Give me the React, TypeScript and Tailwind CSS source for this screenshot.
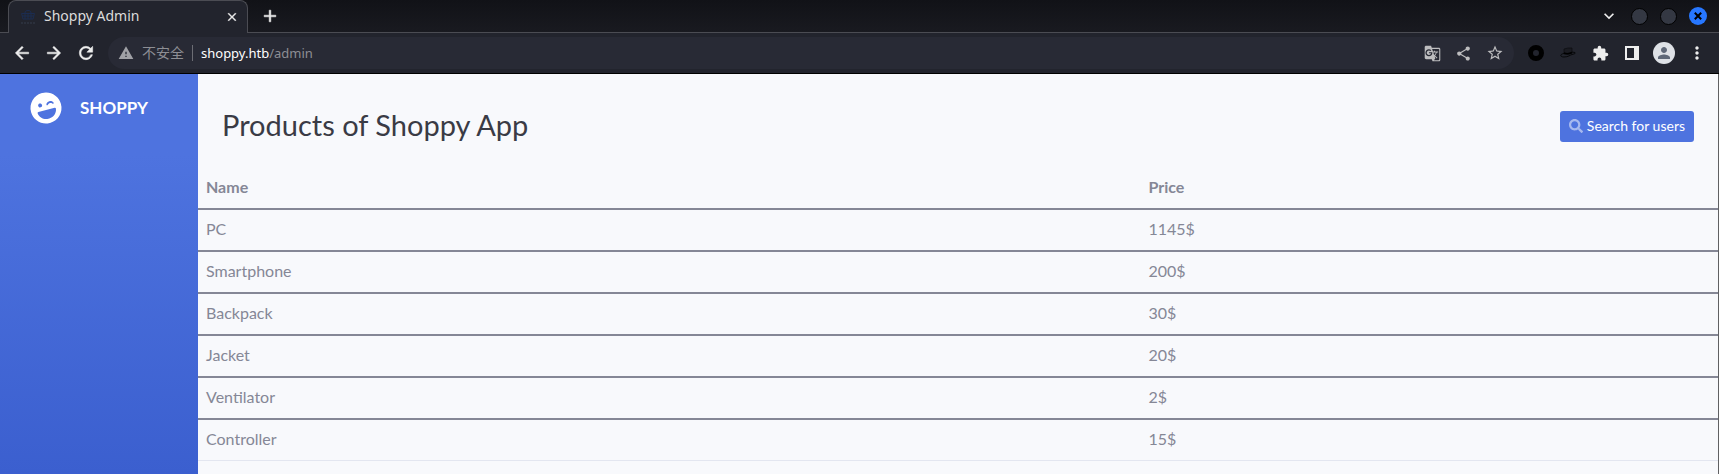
import {
  MdArrowBack, MdArrowForward, MdRefresh, MdWarning, MdGTranslate, MdShare, MdStarBorder,
  MdExtension, MdMoreVert, MdClose, MdAdd, MdPerson, MdExpandMore,
} from "react-icons/md";
import { FaLaughWink, FaSearch } from "react-icons/fa";

const products = [
  { name: "PC", price: "1145$" },
  { name: "Smartphone", price: "200$" },
  { name: "Backpack", price: "30$" },
  { name: "Jacket", price: "20$" },
  { name: "Ventilator", price: "2$" },
  { name: "Controller", price: "15$" },
];

const boldIcon = "[&>path:last-child]:stroke-current [&>path:last-child]:[stroke-width:0.6]";

function Favicon() {
  return (
    <svg viewBox="0 0 16 16" className="size-4" fill="none" stroke="#1b2c50" aria-hidden="true">
      <path d="M5 4c0-3.500 6-3.500 6 0M1.500 4.500h13l-1.500 5.500h-10zM5 5v5M8 5v5M11 5v5M2 7h12" />
      <path d="M1 14h14" stroke="#2b303c" strokeWidth="2" strokeDasharray="2 1" />
    </svg>
  );
}

function TabStrip() {
  return (
    <div className="flex h-8 items-center bg-linear-to-b from-[#111217] to-[#191a20]">
      <div className="relative z-10 ml-2 -mb-px flex h-[33px] w-60 items-center rounded-t-lg border border-b-0 border-[#4b4c53] bg-[#22242d] pl-[11px] pr-2">
        <Favicon />
        <span className="ml-2 flex-1 pb-0.5 text-sm text-[#dcdcdc]">Shoppy Admin</span>
        <button aria-label="Close tab" className="text-[#eeeeee]"><MdClose size={14} className={boldIcon} /></button>
      </div>
      <button aria-label="New tab" className="ml-3 text-[#eeeeee]"><MdAdd size={20} className={boldIcon} /></button>
      <div className="ml-auto flex items-center pr-3">
        <button aria-label="Search tabs" className="mr-3 text-[#eeeeee]"><MdExpandMore size={20} /></button>
        <button aria-label="Minimize" className="mr-3 size-[17px] rounded-full border border-black bg-[#343843]" />
        <button aria-label="Maximize" className="mr-3 size-[17px] rounded-full border border-black bg-[#343843]" />
        <button aria-label="Close window" className="flex size-[18px] items-center justify-center rounded-full bg-[#2777ff] text-black">
          <svg viewBox="0 0 10 10" className="size-2" stroke="currentColor" strokeWidth="2.5"><path d="M1 1l8 8M9 1l-8 8" /></svg>
        </button>
      </div>
    </div>
  );
}

function Toolbar() {
  return (
    <div className="flex h-[42px] items-center border-t border-b border-t-[#4b4c53] border-b-black bg-[#22242d] pl-3 pr-3 text-[#eeeeee]">
      <button aria-label="Back"><MdArrowBack size={20} className={boldIcon} /></button>
      <button aria-label="Forward" className="ml-3"><MdArrowForward size={20} className={boldIcon} /></button>
      <button aria-label="Reload" className="ml-3"><MdRefresh size={20} className={boldIcon} /></button>
      <div className="ml-3 flex h-8 flex-1 items-center rounded-full bg-[#282a35] pl-2.5 pr-2.5 text-sm">
        <MdWarning size={16} className="text-[#a0a1a6]" />
        <span className="ml-2 text-[#8d8e94]">不安全</span>
        <span className="mx-2 h-4 w-px bg-[#6c6d74]" />
        <span className="flex-1 text-[13px] text-[#8d8e94]"><span className="text-white">shoppy.htb</span>/admin</span>
        <div className="flex items-center gap-3.5 text-[#bdbdbf]">
          <button aria-label="Translate"><MdGTranslate size={17} /></button>
          <button aria-label="Share"><MdShare size={17} /></button>
          <button aria-label="Bookmark"><MdStarBorder size={18} /></button>
        </div>
      </div>
      <button aria-label="Ring extension" className="ml-3.5 size-4 rounded-full border-[5px] border-black" />
      <button aria-label="Hat extension" className="ml-4">
        <svg viewBox="0 0 16 12" className="h-3 w-4" aria-hidden="true">
          <path d="M4 2q4-1.500 8-1v5q-4 2-8 1z" fill="#1a1b21" stroke="#0c0d10" strokeWidth="0.7" />
          <path d="M4 6.500C0 7-.5 10 4 10s6-2 8-2.500 4-1 3-2l-3-.5" fill="none" stroke="#07080a" />
          <path d="M4 6q4 1.500 8-.5" fill="none" stroke="#000" strokeWidth="1.500" />
        </svg>
      </button>
      <button aria-label="Extensions" className="ml-4"><MdExtension size={17} /></button>
      <button aria-label="Side panel" className="ml-4 h-3.5 w-3.5 border-2 border-r-[5px] border-[#eeeeee]" />
      <button aria-label="Profile" className="ml-3.5 flex size-[22px] items-center justify-center rounded-full bg-[#dee1e6] text-[#5f6878]"><MdPerson size={18} /></button>
      <button aria-label="Menu" className="ml-3"><MdMoreVert size={20} /></button>
    </div>
  );
}

export default function App() {
  return (
    <div className="flex min-h-screen flex-col overflow-hidden bg-[#f8f9fc]">
      <header className="font-['Noto_Sans','Noto_Sans_CJK_SC',sans-serif]">
        <TabStrip />
        <Toolbar />
      </header>
      <div className="flex flex-1 border-r border-[#606163] font-[Lato,sans-serif] text-base text-[#858796]">
        <aside className="w-[198px] shrink-0 bg-linear-to-b from-[#4e73df] from-20% to-[#3b5fcf]">
          <a href="#" className="flex items-center gap-[18px] px-[30px] pt-[18px] text-[17px] font-bold text-white">
            <FaLaughWink size={32} className="-rotate-15" />
            <span>SHOPPY</span>
          </a>
        </aside>
        <main className="flex-1">
          <div className="flex items-center justify-between px-6 pt-8 pb-[22px]">
            <h1 className="pb-0.5 text-[29px] leading-[38px] text-[#3a3b45]">Products of Shoppy App</h1>
            <button className="flex h-[31px] items-center gap-1 rounded-[3px] bg-[#4e73df] px-[9px] text-sm text-white">
              <FaSearch size={14} className="text-white/50" />
              Search for users
            </button>
          </div>
          <table className="w-full table-fixed border-collapse text-left leading-6">
            <thead>
              <tr className="border-b-2 border-[#858796]">
                <th className="w-[62%] px-2 pt-[7px] pb-[9px] font-bold">Name</th>
                <th className="px-2 pt-[7px] pb-[9px] font-bold">Price</th>
              </tr>
            </thead>
            <tbody>
              {products.map((p) => (
                <tr key={p.name} className="border-b-2 border-[#858796] last:border-b last:border-[#e3e6f0]">
                  <td className="px-2 pt-[7px] pb-[9px]">{p.name}</td>
                  <td className="px-2 pt-[7px] pb-[9px]">{p.price}</td>
                </tr>
              ))}
            </tbody>
          </table>
        </main>
      </div>
    </div>
  );
}
